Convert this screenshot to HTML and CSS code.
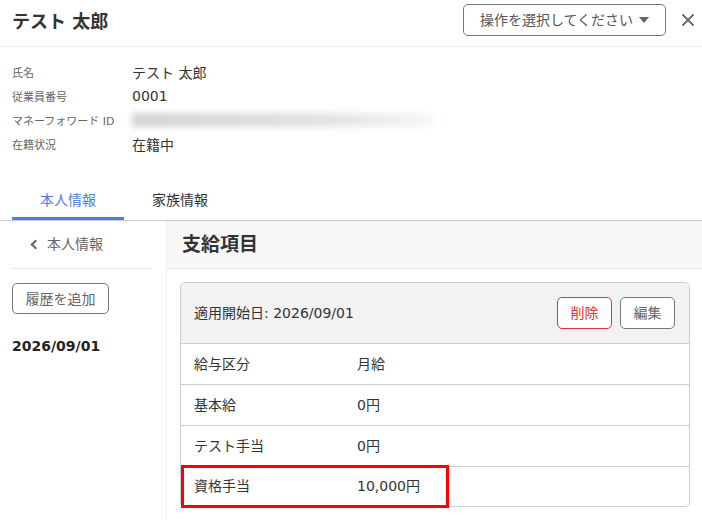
FILE: index.html
```html
<!DOCTYPE html>
<html lang="ja">
<head>
  <meta charset="UTF-8" />
  <title>テスト 太郎 | 従業員詳細</title>
  <link rel="stylesheet" href="styles.css">
</head>
<body>
  <header class="topbar">
    <h1>テスト 太郎</h1>
    <div class="actions">
      <button class="select-btn">操作を選択してください <span class="caret"></span></button>
      <button class="close-btn" aria-label="閉じる">
        <svg width="14" height="14" viewBox="0 0 14 14"><path d="M1.5 1.5L12.5 12.5M12.5 1.5L1.5 12.5" stroke="#666" stroke-width="1.8" fill="none"/></svg>
      </button>
    </div>
  </header>

  <dl class="profile">
    <div class="prow"><dt>氏名</dt><dd>テスト 太郎</dd></div>
    <div class="prow"><dt>従業員番号</dt><dd>0001</dd></div>
    <div class="prow"><dt>マネーフォワード ID</dt><dd><span class="masked"></span></dd></div>
    <div class="prow"><dt>在籍状況</dt><dd>在籍中</dd></div>
  </dl>

  <nav class="tabs">
    <a class="tab active">本人情報</a>
    <a class="tab">家族情報</a>
  </nav>

  <div class="main">
    <aside class="side">
      <a class="back"><span class="chev"></span>本人情報</a>
      <button class="add-btn">履歴を追加</button>
      <div class="hist-date">2026/09/01</div>
    </aside>

    <section class="content">
      <h2 class="content-head">支給項目</h2>
      <div class="card">
        <div class="card-head">
          <span>適用開始日: 2026/09/01</span>
          <div class="card-btns">
            <button class="btn danger">削除</button>
            <button class="btn">編集</button>
          </div>
        </div>
        <div class="row"><span class="key">給与区分</span><span>月給</span></div>
        <div class="row"><span class="key">基本給</span><span>0円</span></div>
        <div class="row"><span class="key">テスト手当</span><span>0円</span></div>
        <div class="row marked"><span class="key">資格手当</span><span>10,000円</span><span class="mark"></span></div>
      </div>
    </section>
  </div>
</body>
</html>
```

FILE: styles.css
```css
* { margin: 0; padding: 0; box-sizing: border-box; }
body { font-family: "DejaVu Sans", "Noto Sans CJK JP", sans-serif; color: #333; background: #fff; font-size: 14px; }
button { font-family: inherit; background: #fff; cursor: pointer; }

/* top bar */
.topbar { height: 47px; display: flex; align-items: center; justify-content: space-between; padding: 0 4px 0 12px; border-bottom: 1px solid #ececec; }
.topbar h1 { font-size: 18px; font-weight: 700; color: #333; margin-top: -7px; }
.actions { display: flex; align-items: center; gap: 12px; margin-top: -6px; }
.select-btn { width: 203px; height: 32px; border: 1px solid #777; border-radius: 5px; color: #555; font-size: 14px; display: flex; align-items: center; justify-content: center; gap: 6px; padding-bottom: 2px; }
.caret { width: 0; height: 0; border-left: 5px solid transparent; border-right: 5px solid transparent; border-top: 6px solid #666; margin-top: 2px; }
.close-btn { border: none; width: 20px; height: 20px; display: flex; align-items: center; justify-content: center; }

/* profile */
.profile { padding: 13px 12px 0; }
.prow { display: flex; align-items: center; height: 24px; }
.prow dt { width: 120px; font-size: 11px; color: #666; }
.prow dd { font-size: 14px; color: #333; }
.masked { display: block; width: 310px; height: 14px; background: linear-gradient(90deg, #d4d4d4, #e2e2e2 60%, #f2f2f2 90%, #fff); filter: blur(3px); }

/* tabs */
.tabs { display: flex; padding: 0 12px; margin-top: 27px; border-bottom: 1px solid #ccc; }
.tab { width: 112px; height: 37px; display: flex; align-items: center; justify-content: center; font-size: 14px; color: #333; border-bottom: 3px solid transparent; padding-bottom: 2px; cursor: pointer; }
.tab.active { color: #4a7fdf; border-bottom-color: #4a7fdf; }

/* body split */
.main { display: flex; min-height: 300px; }
.side { width: 167px; border-right: 1px solid #eee; padding: 0 14px 0 12px; }
.back { height: 48px; display: flex; align-items: center; padding-left: 18px; padding-bottom: 3px; gap: 8px; color: #666; font-size: 14px; border-bottom: 1px solid #e6e6e6; }
.chev { width: 7px; height: 7px; border-left: 2px solid #666; border-bottom: 2px solid #666; transform: rotate(45deg); margin-left: 2px; margin-top: 2px; }
.add-btn { margin-top: 14px; width: 97px; height: 31px; border: 1px solid #777; border-radius: 5px; color: #666; font-size: 14px; padding-bottom: 2px; }
.hist-date { margin-top: 24px; font-weight: 700; font-size: 14px; color: #222; }

.content { flex: 1; }
.content-head { height: 48px; background: #f8f8f8; border-bottom: 1px solid #e8e8e8; font-size: 19px; font-weight: 700; padding: 0 0 4px 15px; display: flex; align-items: center; color: #333; }

.card { margin: 13px 12px 0 13px; border: 1px solid #ccc; border-radius: 5px; }
.card-head { height: 60px; background: #f2f2f2; border-radius: 5px 5px 0 0; display: flex; align-items: center; justify-content: space-between; padding: 0 14px 0 13px; }
.card-head > span { padding-bottom: 3px; }
.card-btns { display: flex; gap: 8px; }
.btn { width: 55px; height: 32px; border: 1px solid #777; border-radius: 5px; color: #666; font-size: 14px; padding-bottom: 2px; }
.btn.danger { border-color: #d33; color: #d33; }

.row { height: 41px; border-top: 1px solid #ccc; display: flex; align-items: center; padding: 0 0 3px 13px; position: relative; }
.row .key { width: 163px; }
.row.marked { height: 40px; }
.mark { position: absolute; left: 0; top: -2px; width: 268px; height: 43px; border: 3px solid #f00; }
```
